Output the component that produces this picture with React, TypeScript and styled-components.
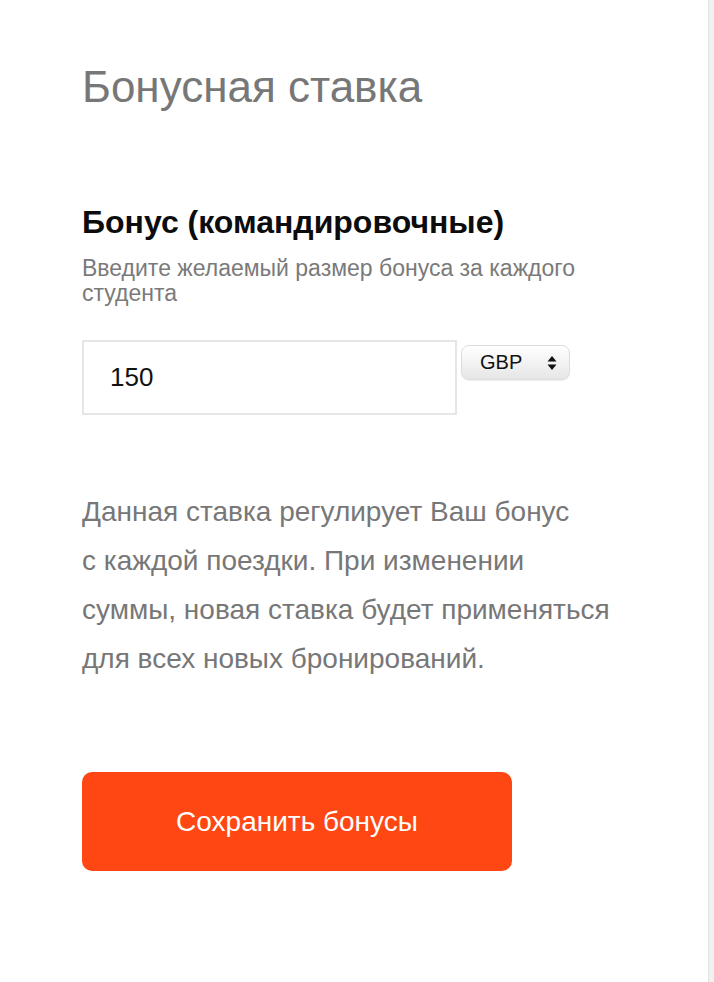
import React from "react";
import styled, { createGlobalStyle } from "styled-components";

const Global = createGlobalStyle`
  html, body { margin: 0; padding: 0; background: #ffffff; }
  body { font-family: "Liberation Sans", Arial, Helvetica, sans-serif; }
`;

const Page = styled.div`
  display: flex;
  min-height: 982px;
`;

const Main = styled.main`
  flex: 1;
  display: flex;
  flex-direction: column;
  align-items: flex-start;
  padding: 62px 0 0 82px;
`;

const Gutter = styled.div`
  width: 5px;
  border-left: 1px solid #e2e2e2;
  background: #f1f1f1;
`;

const Title = styled.h1`
  margin: 0;
  font-size: 44px;
  line-height: 50px;
  font-weight: 400;
  color: #777777;
`;

const FieldHeading = styled.h2`
  margin: 92px 0 0;
  font-size: 32px;
  line-height: 36px;
  font-weight: 700;
  color: #0c0c0c;
`;

const Hint = styled.p`
  margin: 16px 0 0;
  width: 560px;
  font-size: 23px;
  line-height: 25px;
  color: #7a7a7a;
`;

const InputRow = styled.div`
  display: flex;
  align-items: flex-start;
  gap: 4px;
  margin-top: 34px;
`;

const AmountInput = styled.input`
  box-sizing: border-box;
  width: 375px;
  height: 75px;
  border: 2px solid #e6e6e6;
  padding: 0 0 0 26px;
  font-family: inherit;
  font-size: 26px;
  color: #111111;
  background: #ffffff;
  outline: none;
`;

const CurrencySelect = styled.div`
  box-sizing: border-box;
  margin-top: 5px;
  width: 109px;
  height: 35px;
  display: flex;
  align-items: center;
  justify-content: space-between;
  padding: 0 12px 0 18px;
  border: 1px solid #dcdcdc;
  border-radius: 8px;
  background: linear-gradient(#ffffff 0%, #f4f4f4 45%, #e6e6e6 100%);
  box-shadow: inset 0 1px 0 #ffffff, 0 1px 1px rgba(0, 0, 0, 0.06);
  font-size: 20px;
  color: #111111;
`;

const Description = styled.p`
  margin: 72px 0 0;
  font-size: 28px;
  line-height: 49px;
  color: #777777;
`;

const SaveButton = styled.button`
  margin-top: 89px;
  width: 430px;
  height: 99px;
  border: none;
  border-radius: 10px;
  background: #ff4714;
  color: #ffffff;
  font-family: inherit;
  font-size: 28px;
  cursor: pointer;
`;

const Arrows = () => (
  <svg width="10" height="16" viewBox="0 0 10 16" aria-hidden="true">
    <path d="M5 1 L9.5 6.5 H0.5 Z" fill="#111" />
    <path d="M5 15 L9.5 9.5 H0.5 Z" fill="#111" />
  </svg>
);

export default function App() {
  return (
    <>
      <Global />
      <Page>
        <Main>
          <Title>Бонусная ставка</Title>
          <FieldHeading>Бонус (командировочные)</FieldHeading>
          <Hint>Введите желаемый размер бонуса за каждого студента</Hint>
          <InputRow>
            <AmountInput defaultValue="150" />
            <CurrencySelect>
              <span>GBP</span>
              <Arrows />
            </CurrencySelect>
          </InputRow>
          <Description>
            Данная ставка регулирует Ваш бонус
            <br />
            с каждой поездки. При изменении
            <br />
            суммы, новая ставка будет применяться
            <br />
            для всех новых бронирований.
          </Description>
          <SaveButton>Сохранить бонусы</SaveButton>
        </Main>
        <Gutter />
      </Page>
    </>
  );
}
